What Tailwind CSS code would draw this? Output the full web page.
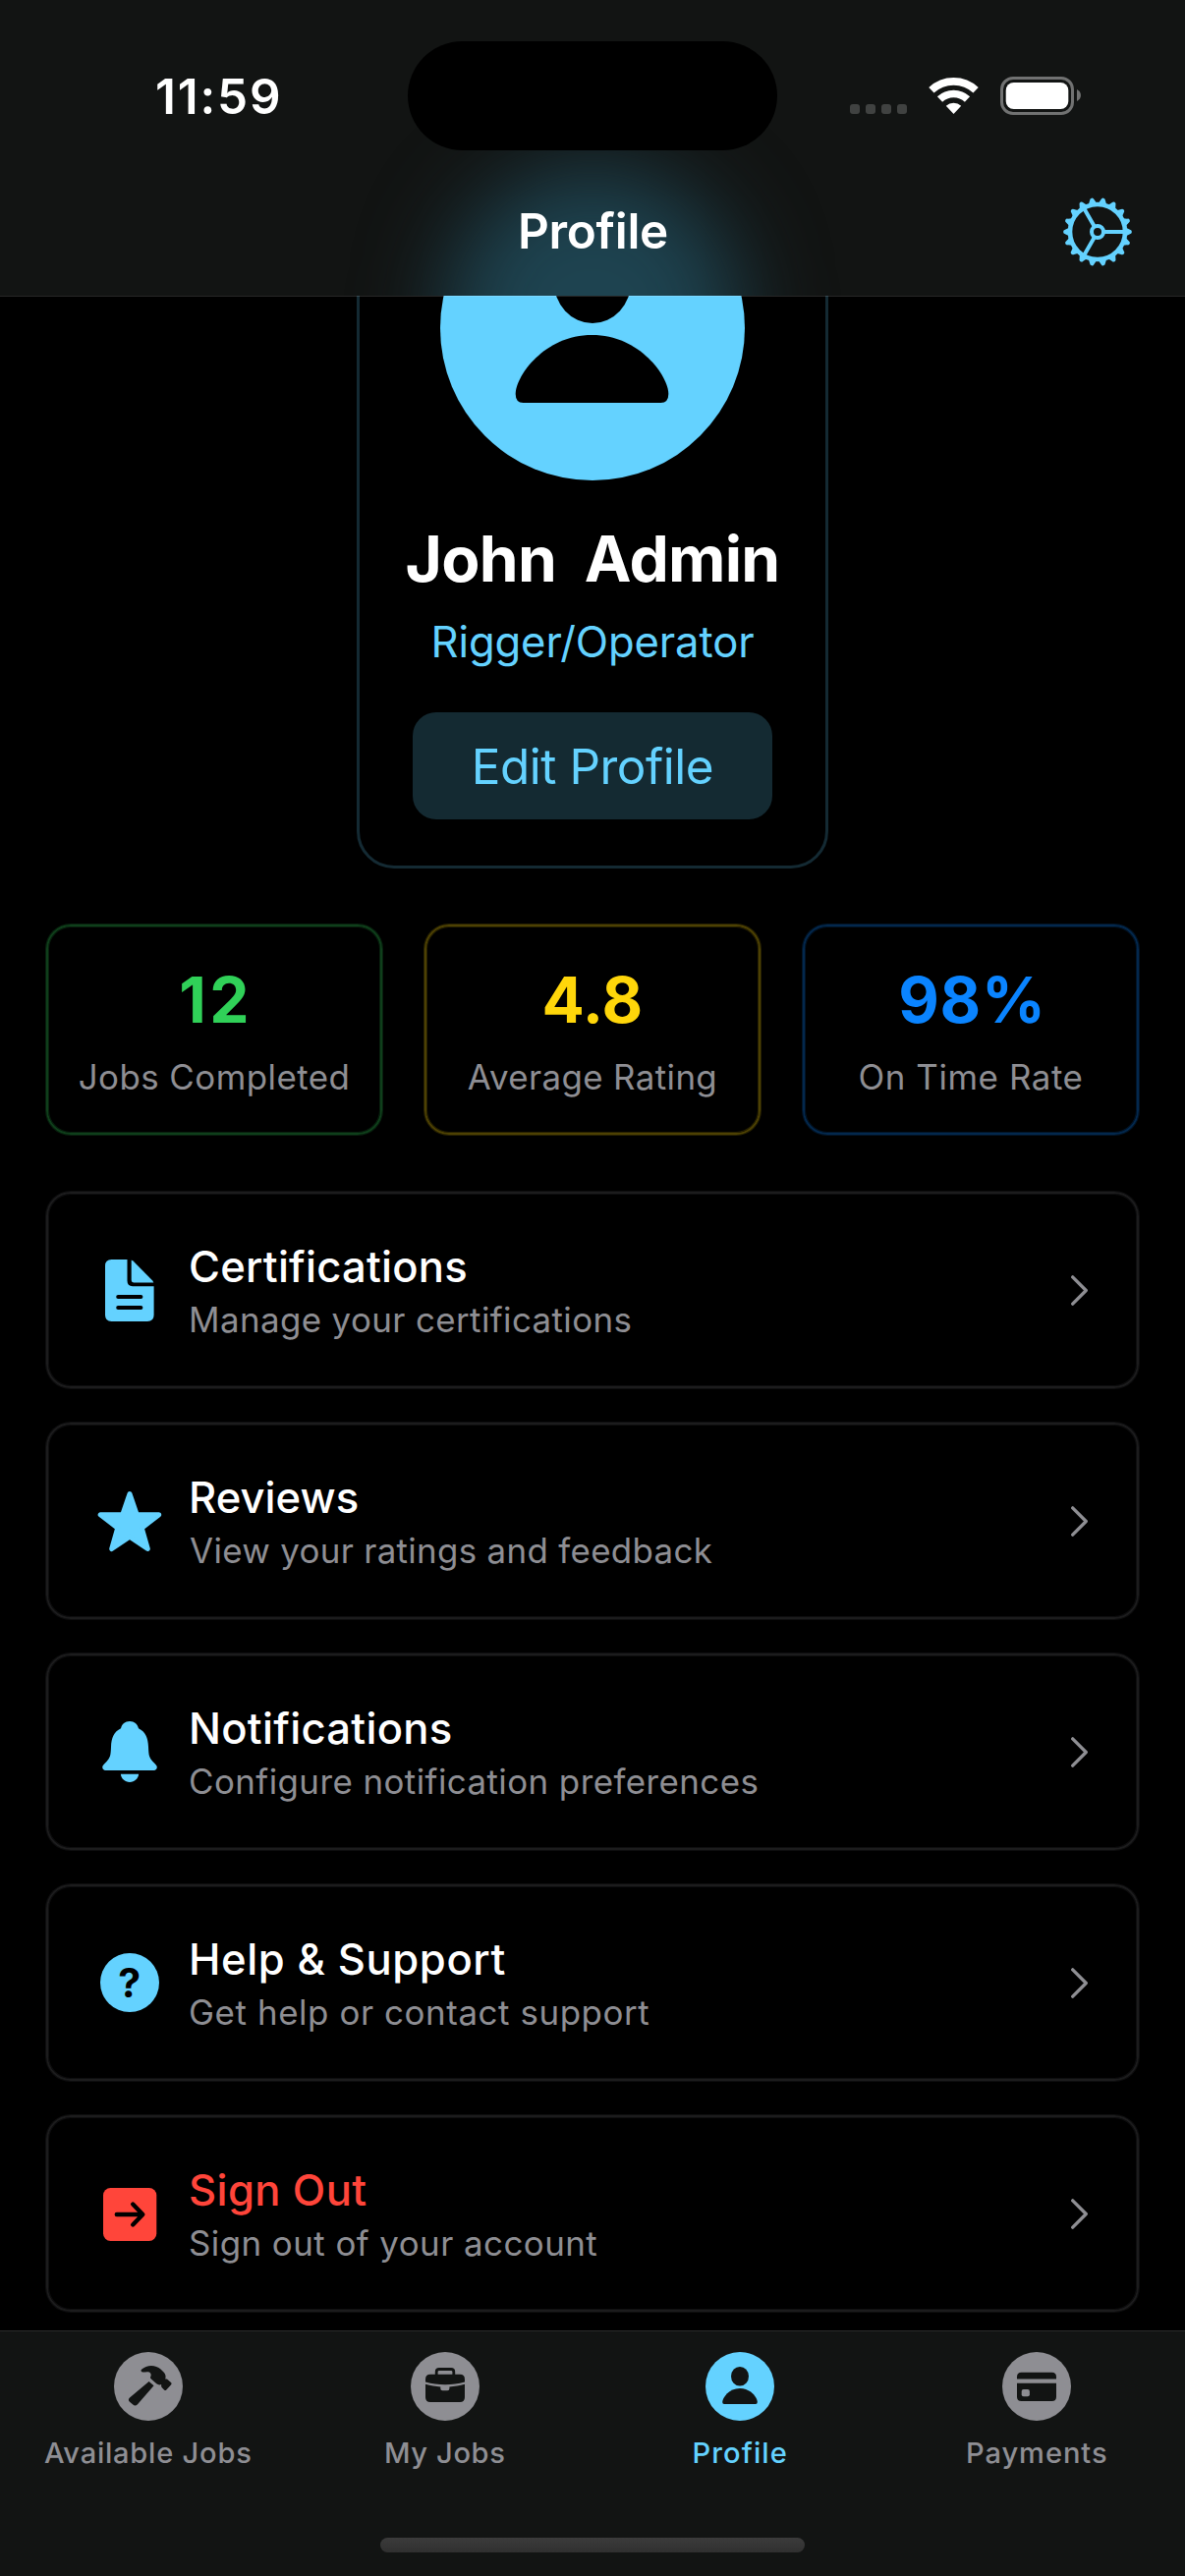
<!DOCTYPE html>
<html lang="en">
<head>
<meta charset="utf-8">
<title>Profile</title>
<script src="https://cdn.jsdelivr.net/npm/@tailwindcss/browser@4"></script>
</head>
<body class="bg-black">
<div class="flex h-[2622px] w-[1206px] flex-col overflow-hidden bg-black font-[Inter,sans-serif] text-white">

  <!-- Header: status bar and navigation title -->
  <header class="relative z-10 h-[301px] shrink-0 bg-[#121413]">
    <div class="absolute inset-0 overflow-hidden">
      <div class="absolute left-[453px] top-[170px] h-[320px] w-[300px] rounded-full bg-[#1e4350] blur-[44px]"></div>
    </div>
    <div class="absolute inset-x-0 -bottom-px h-px bg-white/15"></div>

    <div class="relative flex h-[194px] items-center">
      <div class="w-[415px] pl-[158px] pt-[2px] text-[49.4px] font-semibold leading-[60px] tracking-[1.83px]">11:59</div>
      <div class="h-[111px] w-[376px] rounded-full bg-black"></div>
      <div class="flex items-end gap-[22px] pl-[74px] pt-px">
        <div class="mb-px flex gap-[6px]">
          <span class="size-[10px] rounded-[3px] bg-[#404241]"></span>
          <span class="size-[10px] rounded-[3px] bg-[#404241]"></span>
          <span class="size-[10px] rounded-[3px] bg-[#404241]"></span>
          <span class="size-[10px] rounded-[3px] bg-[#404241]"></span>
        </div>
        <svg class="mb-px h-[38px] w-[51px]" viewBox="0 0 51 38" fill="none" stroke="#fff">
          <path stroke-width="7.7" d="M2.9 13.8A33.1 33.1 0 0 1 48.1 13.8"/>
          <path stroke-width="7.6" d="M11.5 23A20.5 20.5 0 0 1 39.5 23"/>
          <path fill="#fff" stroke="none" d="M25.5 38L17.8 29.7A11.3 11.3 0 0 1 33.2 29.7Z"/>
        </svg>
        <svg class="h-[39px] w-[82px]" viewBox="0 0 82 39">
          <rect x="1.5" y="1.5" width="72" height="36" rx="11.5" fill="none" stroke="#717272" stroke-width="3"/>
          <rect x="5.7" y="6" width="63.6" height="27" rx="8" fill="#fff"/>
          <path d="M78 13C83.3 15.500 83.300 22.500 78 25Z" fill="#717272"/>
        </svg>
      </div>
    </div>

    <div class="relative grid h-[83px] grid-cols-3 items-center">
      <h1 class="col-start-2 -mt-[2px] pl-px text-center text-[49.4px] font-semibold leading-[60px] tracking-[-0.3px]">Profile</h1>
      <div class="flex justify-end pr-[53px]">
        <svg class="size-[72px]" viewBox="-36 -36 72 72" fill="none" stroke="#64d2ff">
          <circle r="28" stroke-width="4.6"/>
          <circle r="6" stroke-width="4"/>
          <path stroke-width="4" d="M7 0H28M-3.500 -6.060L-14 -24.250M-3.500 6.060L-14 24.250"/>
          <g id="teeth" fill="#64d2ff" stroke="none"></g>
        </svg>
      </div>
    </div>
  </header>

  <!-- Scrolled content -->
  <main class="flex min-h-0 flex-1 flex-col overflow-hidden">
    <section class="-mt-[170px] flex h-[753px] w-[480px] shrink-0 flex-col items-center self-center rounded-[38px] border-[3px] border-[#142a33] pt-[45px]">
      <svg class="size-[310px] shrink-0" viewBox="0 0 310 310">
        <circle cx="155" cy="155" r="155" fill="#64d2ff"/>
        <ellipse cx="155" cy="107" rx="39.4" ry="43"/>
        <path d="M84.500 231Q76.700 231 76.700 222C76.700 204 106 162 154.500 162S232.300 204 232.300 222Q232.300 231 224.500 231Z"/>
      </svg>
      <h2 class="mt-[41px] whitespace-pre text-[64px] font-bold leading-[78px] tracking-[-0.74px]">John  Admin</h2>
      <p class="mt-[19px] text-[43.6px] leading-[54px] tracking-[-0.13px] text-[#64d2ff]">Rigger/Operator</p>
      <button class="mt-[44px] h-[109px] w-[366px] shrink-0 rounded-[24px] bg-[#142a32] pt-px text-[49.4px] leading-[60px] tracking-[-0.46px] text-[#64d2ff]">Edit Profile</button>
    </section>

    <section class="mt-[57px] flex shrink-0 gap-[43px] px-[47px] text-center">
      <div class="h-[214px] flex-1 rounded-[25px] border-2 border-[#0f3f1b] pt-[36px] shadow-[0_0_0_1px_#0f3f1b80,inset_0_0_0_1px_#0f3f1b80]">
        <div class="pl-[3px] text-[64px] font-bold leading-[78px] tracking-[3.4px] text-[#30d158]">12</div>
        <div class="mt-[15px] text-[34.9px] leading-[48px] tracking-[0.45px] text-[#8e8e93]">Jobs Completed</div>
      </div>
      <div class="h-[214px] flex-1 rounded-[25px] border-2 border-[#4d4103] pt-[36px] shadow-[0_0_0_1px_#4d410380,inset_0_0_0_1px_#4d410380]">
        <div class="text-[64px] font-bold leading-[78px] tracking-[0.16px] text-[#ffd60a]">4.8</div>
        <div class="mt-[15px] text-[34.9px] leading-[48px] tracking-[0.38px] text-[#8e8e93]">Average Rating</div>
      </div>
      <div class="h-[214px] flex-1 rounded-[25px] border-2 border-[#03284d] pt-[36px] shadow-[0_0_0_1px_#03284d80,inset_0_0_0_1px_#03284d80]">
        <div class="pl-[3px] text-[64px] font-bold leading-[78px] tracking-[0.69px] text-[#0a84ff]">98%</div>
        <div class="mt-[15px] text-[34.9px] leading-[48px] tracking-[0.57px] text-[#8e8e93]">On Time Rate</div>
      </div>
    </section>

    <section class="mt-[58px] flex shrink-0 flex-col gap-[35px] px-[47px]">
      <div class="flex h-[200px] items-center rounded-[25px] border-2 border-[#1c1c1d] pl-[47px] pr-[49px] shadow-[0_0_0_1px_#1c1c1d80,inset_0_0_0_1px_#1c1c1d80]">
        <svg class="size-[72px]" viewBox="0 0 72 72">
          <path fill="#64d2ff" d="M17.500 5H33.500V26.500Q33.500 32.200 39 32.200H60.600V61.500Q60.600 68 54 68H17.500Q11 68 11 61.500V11.500Q11 5 17.500 5Z"/>
          <path fill="#64d2ff" d="M37.700 5.400Q38.500 5.600 39.500 6.600L59 26.300Q60 27.500 60.300 28.400H40Q37.700 28.400 37.700 26Z"/>
          <path stroke="#000" stroke-width="4" stroke-linecap="round" d="M24.200 43H47.400M24.200 54H47.400"/>
        </svg>
        <div class="ml-[24px] flex-1 pt-[4px]">
          <div class="text-[43.6px] font-medium leading-[54px] tracking-[0.22px]">Certifications</div>
          <div class="mt-[2px] text-[34.9px] leading-[48px] tracking-[0.39px] text-[#8e8e93]">Manage your certifications</div>
        </div>
        <svg class="h-[32px] w-[18px]" viewBox="0 0 18 32" fill="none" stroke="#8e8e93" stroke-width="3.3" stroke-linecap="round" stroke-linejoin="round"><path d="M1.700 2.800L15.300 16.500L1.700 30.200"/></svg>
      </div>

      <div class="flex h-[200px] items-center rounded-[25px] border-2 border-[#1c1c1d] pl-[47px] pr-[49px] shadow-[0_0_0_1px_#1c1c1d80,inset_0_0_0_1px_#1c1c1d80]">
        <svg class="size-[72px]" viewBox="0 0 72 72">
          <path fill="#64d2ff" stroke="#64d2ff" stroke-width="5" stroke-linejoin="round" d="M36 8.500L43.200 29.500L65.800 29.800L48.300 43.400L54.300 64.500L36 52.200L17.700 64.500L23.700 43.400L6.200 29.800L28.800 29.500Z"/>
        </svg>
        <div class="ml-[24px] flex-1 pt-[4px]">
          <div class="text-[43.6px] font-medium leading-[54px] tracking-[0.03px]">Reviews</div>
          <div class="mt-[2px] pl-px text-[34.9px] leading-[48px] tracking-[0.32px] text-[#8e8e93]">View your ratings and feedback</div>
        </div>
        <svg class="h-[32px] w-[18px]" viewBox="0 0 18 32" fill="none" stroke="#8e8e93" stroke-width="3.3" stroke-linecap="round" stroke-linejoin="round"><path d="M1.700 2.800L15.300 16.500L1.700 30.200"/></svg>
      </div>

      <div class="flex h-[200px] items-center rounded-[25px] border-2 border-[#1c1c1d] pl-[47px] pr-[49px] shadow-[0_0_0_1px_#1c1c1d80,inset_0_0_0_1px_#1c1c1d80]">
        <svg class="size-[72px]" viewBox="0 0 72 72" fill="#64d2ff">
          <path d="M36 5C40.800 5 44 8 45 12.200C52 15.500 54.700 22 55 31C55.300 40 56 42 59.500 46C62 48.700 63.800 50 63.800 51.700C63.800 54 62 55.100 59.500 55.100H12.500C10 55.100 8.200 54 8.200 51.700C8.200 50 10 48.700 12.500 46C16 42 16.700 40 17 31C17.300 22 20 15.500 27 12.200C28 8 31.200 5 36 5Z"/>
          <path d="M26.800 58.800H45.200C44.500 63.500 41 67 36 67S27.500 63.500 26.800 58.800Z"/>
        </svg>
        <div class="ml-[24px] flex-1 pt-[4px]">
          <div class="text-[43.6px] font-medium leading-[54px] tracking-[0.27px]">Notifications</div>
          <div class="mt-[2px] text-[34.9px] leading-[48px] tracking-[0.43px] text-[#8e8e93]">Configure notification preferences</div>
        </div>
        <svg class="h-[32px] w-[18px]" viewBox="0 0 18 32" fill="none" stroke="#8e8e93" stroke-width="3.3" stroke-linecap="round" stroke-linejoin="round"><path d="M1.700 2.800L15.300 16.500L1.700 30.200"/></svg>
      </div>

      <div class="flex h-[200px] items-center rounded-[25px] border-2 border-[#1c1c1d] pl-[47px] pr-[49px] shadow-[0_0_0_1px_#1c1c1d80,inset_0_0_0_1px_#1c1c1d80]">
        <svg class="size-[72px]" viewBox="0 0 72 72">
          <circle cx="36" cy="36" r="30" fill="#64d2ff"/>
          <text x="35.800" y="51.200" text-anchor="middle" font-family="Inter, sans-serif" font-size="41" font-weight="700" fill="#000">?</text>
        </svg>
        <div class="ml-[24px] flex-1 pt-[4px]">
          <div class="text-[43.6px] font-medium leading-[54px] tracking-[0.58px]">Help &amp; Support</div>
          <div class="mt-[2px] text-[34.9px] leading-[48px] tracking-[0.58px] text-[#8e8e93]">Get help or contact support</div>
        </div>
        <svg class="h-[32px] w-[18px]" viewBox="0 0 18 32" fill="none" stroke="#8e8e93" stroke-width="3.3" stroke-linecap="round" stroke-linejoin="round"><path d="M1.700 2.800L15.300 16.500L1.700 30.200"/></svg>
      </div>

      <div class="flex h-[200px] items-center rounded-[25px] border-2 border-[#1c1c1d] pl-[47px] pr-[49px] shadow-[0_0_0_1px_#1c1c1d80,inset_0_0_0_1px_#1c1c1d80]">
        <svg class="size-[72px]" viewBox="0 0 72 72">
          <rect x="9" y="10" width="54.300" height="54" rx="7.500" fill="#ff453a"/>
          <path fill="none" stroke="#000" stroke-width="4.400" stroke-linecap="round" stroke-linejoin="round" d="M22.800 37H49M39.200 26.500L49.300 37L39.200 47.500"/>
        </svg>
        <div class="ml-[24px] flex-1 pt-[4px]">
          <div class="text-[43.6px] font-medium leading-[54px] tracking-[0.37px] text-[#ff453a]">Sign Out</div>
          <div class="mt-[2px] text-[34.9px] leading-[48px] tracking-[0.44px] text-[#8e8e93]">Sign out of your account</div>
        </div>
        <svg class="h-[32px] w-[18px]" viewBox="0 0 18 32" fill="none" stroke="#8e8e93" stroke-width="3.3" stroke-linecap="round" stroke-linejoin="round"><path d="M1.700 2.800L15.300 16.500L1.700 30.200"/></svg>
      </div>
    </section>
  </main>

  <!-- Tab bar -->
  <nav class="h-[250px] shrink-0 border-t border-[#2a2b2b] bg-[#121413] pt-[21px]">
    <div class="grid grid-cols-4 text-[29.1px] font-medium leading-[36px] text-[#8e8e93]">
      <div class="flex flex-col items-center">
        <svg class="size-[70px]" viewBox="0 0 70 70" fill="#121413">
          <circle cx="35" cy="35" r="35" fill="#8e8e93"/>
          <path d="M28 17.800C33.500 12.500 42.500 12.800 47.500 17.500L50.800 20.700C52.600 22.600 53 25 52.200 27.600C53.600 27.400 54.500 27.900 55.400 28.700L58 31Q59.200 32 58.200 33.200L53.300 38.400Q52.200 39.400 51 38.400L49.300 36.800C48.200 35.800 47.900 34.600 48.200 33C46.500 33.800 44.700 33.500 43.300 32.300L37.900 27.600C36.600 26.300 37 25.300 37.500 24.400C38 23 37.500 21.500 36.300 20.700C34 19.500 31.500 20.600 29.500 20.600C27.600 20.500 27 18.800 28 17.800Z"/>
          <path d="M35.600 29.900L40.500 34.300L24 53.200C22.500 54.800 20.800 54.900 19.300 53.600L16 50.800C14.500 49.500 14.500 47.800 16 46.400Z"/>
        </svg>
        <span class="mt-[15px] tracking-[0.76px]">Available Jobs</span>
      </div>
      <div class="flex flex-col items-center pl-px">
        <svg class="size-[70px]" viewBox="0 0 70 70" fill="#121413">
          <circle cx="35" cy="35" r="35" fill="#8e8e93"/>
          <path fill="none" stroke="#121413" stroke-width="2.800" d="M26.200 24V20.300Q26.200 17.500 29 17.500H41Q43.800 17.500 43.800 20.300V24"/>
          <path d="M20 22.800H50Q55 22.800 55 27.800V30.500C42 34.200 28 34.200 15 30.500V27.800Q15 22.800 20 22.800Z"/>
          <path d="M15 32.800C20 34.300 25.500 35.200 30.300 35.500V37.200Q30.300 39.200 32.300 39.200H37.400Q39.400 39.200 39.400 37.200V35.500C44.500 35.200 50 34.300 55 32.800V46Q55 51 50 51H20Q15 51 15 46Z"/>
        </svg>
        <span class="mt-[15px] tracking-[0.61px]">My Jobs</span>
      </div>
      <div class="flex flex-col items-center pr-px text-[#64d2ff]">
        <svg class="size-[70px]" viewBox="0 0 70 70" fill="#121413">
          <circle cx="35" cy="35" r="35" fill="#64d2ff"/>
          <ellipse cx="35" cy="24.700" rx="9" ry="9.800"/>
          <path d="M19 53Q17.200 53 17.200 51C17.200 46.500 24 36.900 35 36.900S52.800 46.500 52.800 51Q52.800 53 51 53Z"/>
        </svg>
        <span class="mt-[15px] tracking-[1.08px]">Profile</span>
      </div>
      <div class="flex flex-col items-center">
        <svg class="size-[70px]" viewBox="0 0 70 70" fill="#121413">
          <circle cx="35" cy="35" r="35" fill="#8e8e93"/>
          <path d="M19.500 20.700H50.500Q55 20.700 55 25.200V27.500H15V25.200Q15 20.700 19.500 20.700Z"/>
          <path d="M15 31.800H55V45.500Q55 50 50.500 50H19.500Q15 50 15 45.500Z"/>
          <rect x="19.700" y="38" width="8.200" height="7.200" rx="2" fill="#8e8e93"/>
        </svg>
        <span class="mt-[15px] tracking-[0.94px]">Payments</span>
      </div>
    </div>
    <div class="mx-auto mt-[68px] h-[15px] w-[432px] rounded-full bg-linear-to-b from-[#3b3b3b] to-[#303030]"></div>
  </nav>
</div>
<script>
  // Eighteen teeth around the gear rim, one every 20 degrees.
  const teeth = document.getElementById('teeth');
  for (let a = 0; a < 360; a += 20) {
    const p = document.createElementNS('http://www.w3.org/2000/svg', 'path');
    p.setAttribute('d', 'M29 -4.200L33 -2.200Q34.900 -1.800 34.900 0T33 2.200L29 4.200Z');
    p.setAttribute('transform', `rotate(${a})`);
    teeth.append(p);
  }
</script>
</body>
</html>
